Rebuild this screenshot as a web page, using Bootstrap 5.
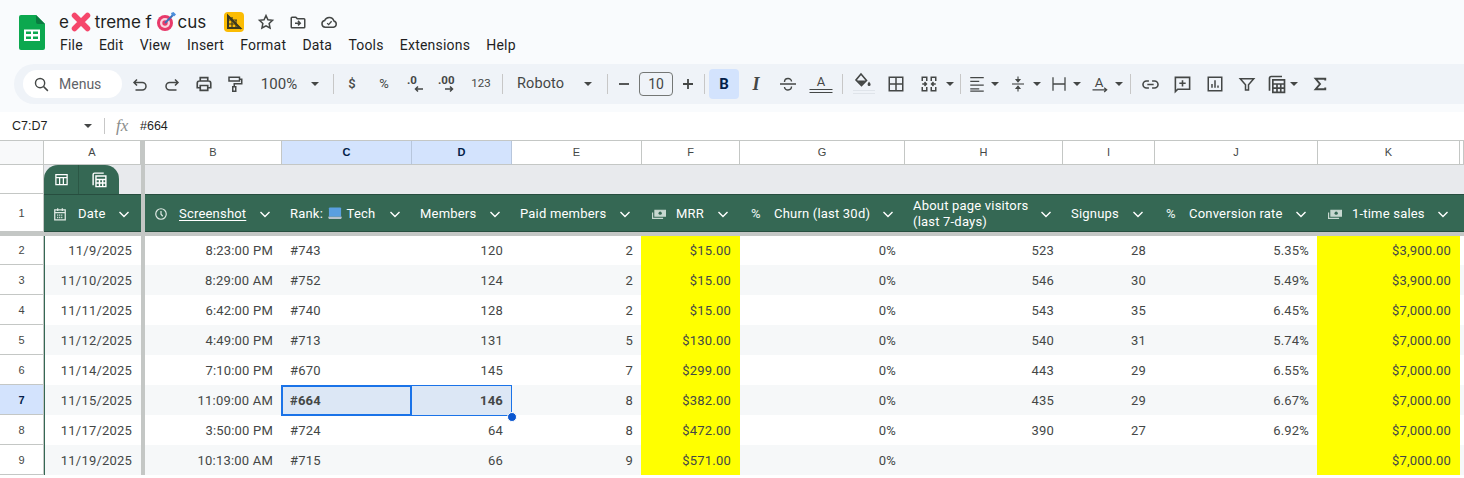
<!DOCTYPE html>
<html lang="en">
<head>
<meta charset="utf-8">
<title>extreme focus</title>
<link href="https://cdn.jsdelivr.net/npm/bootstrap@5.3.0/dist/css/bootstrap.min.css" rel="stylesheet">
<style>
html,body{margin:0;height:478px;overflow:hidden;background:#fff}
body{font-family:Roboto,"Noto Sans",sans-serif;color:#444746}
.appbar{height:112px;background:#f9fbfd;position:relative}
.titlerow{height:64px;display:flex;padding-left:19px}
.logo{width:26px;height:35px;margin-top:15px;margin-right:14px;flex:none}
.titlecol{display:flex;flex-direction:column}
.doctitle{height:24px;margin-top:10px;display:flex;align-items:center;font-size:17px;color:#1f1f1f;line-height:24px;font-family:Inter,Roboto,sans-serif;letter-spacing:-.1px}
.doctitle svg{flex:none}
.gapx{margin:0 4px 0 2px}
.gapt{margin:0 2px 0 4px}
.bd1{margin-left:18px}.bd2{margin-left:13px}.bd3{margin-left:14px}.bd4{margin-left:13px}
.menus{display:flex;font-size:14px;line-height:20px;color:#1f1f1f;margin-top:1px;padding-left:1px;gap:16.2px;letter-spacing:.2px}
.tools{height:40px;margin:0 0 0 14px;background:#eff3f8;border-radius:24px 0 0 24px;display:flex;align-items:center;padding-left:9px}
.searchpill{width:99px;height:28px;background:#fff;border-radius:14px;display:flex;align-items:center;padding-left:10px;font-size:14px;color:#5f6368;gap:9px;margin-right:2px;flex:none}
.tb{display:flex;align-items:center;justify-content:center;flex:none;height:28px;color:#444746}
.tb svg{display:block}
.sep{width:1px;height:20px;background:#c7c7c7;flex:none}
.tt{font-size:14px;color:#444746}
.f15{font-size:15px}.f13{font-size:13px}.f11{font-size:11.5px}.fb{font-weight:500}
.fontname{font-size:14.5px;letter-spacing:.1px;justify-content:flex-start}
.caret{width:0;height:0;border-left:4px solid transparent;border-right:4px solid transparent;border-top:4px solid #444746;flex:none}
.boldon{background:#d3e3fd;border-radius:4px;width:30px;height:30px;font-weight:700;font-size:15px;color:#041e49}
.italt{font-family:"Liberation Serif",serif;font-style:italic;font-weight:700;font-size:18px}
.sizebox{width:34px;height:24px;border:1px solid #747775;border-radius:4px;font-size:14px;display:flex;align-items:center;justify-content:center;flex:none}
.tw8{width:8px}.tw10{width:10px}.tw12{width:12px}.tw14{width:14px}.tw26{width:26px}.tw27{width:27px}.tw28{width:28px}.tw30{width:30px}.tw31{width:31px}.tw32{width:32px}.tw33{width:33px}.tw34{width:34px}.tw48{width:48px}.tw54{width:54px}
.tm1{margin-left:1px}.tm2{margin-left:2px}.tm3{margin-left:3px}.tm4{margin-left:4px}.tm5{margin-left:5px}.tm6{margin-left:6px}.tm11{margin-left:11px}.tm12{margin-left:12px}.tm14{margin-left:14px}.tm16{margin-left:16px}
.fbar{height:28px;background:#fff;display:flex;align-items:center;font-size:13px;color:#1f1f1f}
.namebox{width:92px;display:flex;align-items:center;justify-content:space-between;padding:0 0 0 12px;font-size:12.5px;font-family:"Liberation Sans",sans-serif;flex:none}
.fxsep{width:1px;height:16px;background:#c7c7c7;margin:0 11px 0 12px;flex:none}
.fxico{font-family:"Liberation Serif",serif;font-style:italic;font-size:17px;color:#8a8d8c;width:24px;flex:none;line-height:20px}
.fval{font-size:12.5px;font-family:"Liberation Sans",sans-serif}
.sheetwrap{position:relative;border-top:1px solid #c4c7c5;height:338px;overflow:hidden}
.sheetgrid{border-collapse:separate;border-spacing:0;table-layout:fixed;width:1464px;font-size:13px}
.c44{width:44px}.c97{width:97px}.c4{width:4px}.c137{width:137px}.c130{width:130px}.c100{width:100px}.c98{width:98px}.c165{width:165px}.c158{width:158px}.c92{width:92px}.c163{width:163px}.c142{width:142px}
.sheetgrid td,.sheetgrid th{padding:0;overflow:hidden;white-space:nowrap}
.chead th{height:24px;background:#fff;border-right:1px solid #c4c7c5;border-bottom:1px solid #c4c7c5;text-align:center;font-weight:500;font-size:11px;color:#444746;font-family:"Liberation Sans",sans-serif}
.chead th.corner{background:#f8f9fa}
.chead th.picked{background:#d3e3fd;color:#041e49;font-weight:700;border-right-color:#b7c6dc}
.fz{background:#c4c7c5!important;border:0!important;padding:0!important}
.rowtag{background:#fff;border-right:1px solid #c4c7c5;border-bottom:1px solid #c4c7c5;text-align:center;font-size:11px;color:#444746;font-family:"Liberation Sans",sans-serif}
.rowtag.on{background:#d3e3fd;color:#041e49;font-weight:700}
.graybar td{height:29px;background:#e8eaed;vertical-align:bottom}
.graybar td.rowtag{background:#fff}
.tabshell{display:flex;width:75px;height:29px;background:#356854;border-radius:14px 14px 0 0;color:#fff}
.tabshell span{display:flex;align-items:center;justify-content:center}
.tabshell span:first-child{width:34px;flex:none}
.tabshell span+span{flex:1;border-left:1px solid #2b5745}
.hdr td{height:38px;background:#356854;color:#fff;border-top:1px solid #274e3f;border-bottom:1px solid #274e3f;font-size:13px;line-height:16px;font-weight:400;letter-spacing:.2px}
.hdr td.rowtag{background:#fff;color:#444746;font-size:11px;border-top:0;border-bottom:1px solid #c4c7c5;letter-spacing:0}
.hcell{display:flex;align-items:center;padding:2px 12px 0 8px;height:36px;white-space:nowrap}
.hcell .lab{flex:1;min-width:0}
.hcell svg{flex:none}
.hcell .pre{width:26px;padding-left:2px;display:flex;align-items:center;flex:none}
.pctmark{font-size:13px;color:#dfe9e4;font-weight:500;padding-left:1px}
.laptop{vertical-align:-2px;margin:0 1px 0 2px}
.ul{text-decoration:underline;text-underline-offset:2px}
.fzrow td{height:4px;background:#c4c7c5;padding:0;border:0}
.sheetgrid .dat td{height:30px;padding:2px 9px 0 8px;font-size:13px;color:#444746;background:#fff;text-align:right;letter-spacing:.2px}
.sheetgrid .dat.first td{height:29px;padding-top:0}
.sheetgrid .dat.alt td{background:#f6f8f9}
.sheetgrid .dat td.rowtag{padding-left:0;padding-right:0;background:#fff;text-align:center;font-size:11px;letter-spacing:0}
.sheetgrid .dat td.rowtag.on{background:#d3e3fd;color:#041e49}
.dat td.colA{box-shadow:inset 1px 0 0 #356854}
.sheetgrid .dat td.lf{text-align:left}
.sheetgrid .dat td.yel{background:#ff0;box-shadow:-1px 0 0 #ff0}
.sheetgrid .dat td.sel{background:#dce7f5;font-weight:700}
.sheetgrid .dat td.fz{background:#c4c7c5;padding:0}
.selbox{position:absolute;pointer-events:none}
.selmain{left:281px;top:244px;width:131px;height:31px;border:2px solid #1a73e8}
.selrange{left:281px;top:244px;width:231px;height:31px;border:1px solid #1a73e8}
.selknob{left:507px;top:271px;width:10px;height:10px;background:#0b57d0;border:1px solid #fff;border-radius:50%}
</style>
</head>
<body>
<div class="appbar">
  <div class="titlerow">
    <svg class="logo" viewBox="0 0 26 35"><path d="M2 0h15l9 9v24a2 2 0 0 1-2 2H2a2 2 0 0 1-2-2V2a2 2 0 0 1 2-2z" fill="#0ca84f"/><path d="M17 0l9 9h-7a2 2 0 0 1-2-2z" fill="#0a7a40"/><path d="M5 14.500h16V26H5z" fill="#fff"/><path d="M7 16.500h5v2.500H7zM14 16.500h5v2.500h-5zM7 21.500h5V24H7zM14 21.500h5V24h-5z" fill="#0ca84f"/></svg>
    <div class="titlecol">
      <div class="doctitle"><span>e</span><svg class="gapx" width="20" height="20" viewBox="0 0 20 20"><path d="M3.500 3.500l13 13M16.500 3.500l-13 13" stroke="#f5476b" stroke-width="5.500" stroke-linecap="round"/></svg><span>treme f</span><svg class="gapt" width="20" height="20" viewBox="0 0 20 20"><circle cx="9" cy="11" r="8" fill="#e8396a"/><circle cx="9" cy="11" r="5" fill="#f9d4df"/><circle cx="9" cy="11" r="2.700" fill="#e8396a"/><path d="M9 11L17 3" stroke="#3d6fb8" stroke-width="2"/><path d="M15 1l.8 2.500 2.500.8L20 2.500 17.500 0z" fill="#4c8fdc"/></svg><span>cus</span>
        <svg class="bd1" width="20" height="20" viewBox="0 0 20 20"><rect width="20" height="20" rx="4" fill="#fbbc04"/><path d="M4 4l12 12H4z" fill="none" stroke="#3c3a20" stroke-width="2"/><path d="M4 8h9M4 12h9M8 5v11M12 8v8M4 4l13 13" stroke="#3c3a20" stroke-width="1.200"/></svg>
        <svg class="bd2" width="18" height="18" viewBox="0 0 24 24"><path d="M12 3.500l2.600 5.600 6.100.7-4.500 4.200 1.200 6-5.400-3-5.400 3 1.200-6-4.500-4.200 6.100-.7z" fill="none" stroke="#444746" stroke-width="2"/></svg>
        <svg class="bd3" width="18" height="18" viewBox="0 0 24 24"><path d="M3 6.500a1 1 0 0 1 1-1h5l2 2h9a1 1 0 0 1 1 1v10a1 1 0 0 1-1 1H4a1 1 0 0 1-1-1z" fill="none" stroke="#444746" stroke-width="2"/><path d="M8 13.500h6M12 10.500l3 3-3 3" fill="none" stroke="#444746" stroke-width="2"/></svg>
        <svg class="bd4" width="18" height="18" viewBox="0 0 24 24"><path d="M7 19a4.500 4.500 0 0 1-.8-8.900A6.500 6.500 0 0 1 18.500 10.600 4.300 4.300 0 0 1 18 19z" fill="none" stroke="#444746" stroke-width="2"/><path d="M9.500 13.500l2 2 4-4.500" fill="none" stroke="#444746" stroke-width="1.800"/></svg>
      </div>
      <div class="menus"><span>File</span><span>Edit</span><span>View</span><span>Insert</span><span>Format</span><span>Data</span><span>Tools</span><span>Extensions</span><span>Help</span></div>
    </div>
  </div>
  <div class="tools">
    <div class="searchpill"><svg width="17" height="17" viewBox="0 0 24 24"><circle cx="10" cy="10" r="6.500" fill="none" stroke="#444746" stroke-width="2"/><path d="M15 15l6 6" stroke="#444746" stroke-width="2"/></svg><span>Menus</span></div>
    <div class="tb tw32"><svg width="18" height="18" viewBox="0 0 24 24" fill="none" stroke="#444746" stroke-width="2"><path d="M8 6l-4 4 4 4M4 10h11a5 5 0 0 1 0 10H6"/></svg></div>
    <div class="tb tw32"><svg width="18" height="18" viewBox="0 0 24 24" fill="none" stroke="#444746" stroke-width="2"><path d="M16 6l4 4-4 4M20 10H9a5 5 0 0 0 0 10h9"/></svg></div>
    <div class="tb tw32"><svg width="18" height="18" viewBox="0 0 24 24" fill="none" stroke="#444746" stroke-width="2.200"><path d="M7 8V3.500h10V8M7 17H3v-6a3 3 0 0 1 3-3h12a3 3 0 0 1 3 3v6h-4"/><path d="M7 14h10v6.500H7z"/></svg></div>
    <div class="tb tw30"><svg width="18" height="18" viewBox="0 0 24 24" fill="none" stroke="#444746" stroke-width="2"><path d="M4 3h14v5H4zM18 5.500h3v6H11v4M9 15.500h4v6H9z"/></svg></div>
    <div class="tb tt tw54 f15 tm2">100%</div>
    <div class="tb tw14 tm2"><span class="caret"></span></div>
    <div class="sep tm11"></div>
    <div class="tb tt tw32 tm2 fb f13">$</div>
    <div class="tb tt tw32 f13">%</div>
    <div class="tb tw32"><svg width="22" height="20" viewBox="0 0 22 20"><text x="2" y="10" font-size="11.500" font-weight="700" fill="#444746" font-family="Roboto">.0</text><path d="M18 15h-7M13 12.500L10.500 15l2.500 2.500" fill="none" stroke="#444746" stroke-width="1.500"/></svg></div>
    <div class="tb tw32"><svg width="24" height="20" viewBox="0 0 24 20"><text x="2" y="10" font-size="11.500" font-weight="700" fill="#444746" font-family="Roboto">.00</text><path d="M9 15h7M14 12.500l2.500 2.500-2.500 2.500" fill="none" stroke="#444746" stroke-width="1.500"/></svg></div>
    <div class="tb tt tw30 tm2 f11">123</div>
    <div class="sep tm6"></div>
    <div class="tb tt tw48 tm14 fontname">Roboto</div>
    <div class="tb tw14 tm16"><span class="caret"></span></div>
    <div class="sep tm12"></div>
    <div class="tb tw31"><svg width="14" height="14" viewBox="0 0 14 14"><path d="M2 7h10" stroke="#444746" stroke-width="1.800"/></svg></div>
    <div class="sizebox">10</div>
    <div class="tb tw30"><svg width="14" height="14" viewBox="0 0 14 14"><path d="M2 7h10M7 2v10" stroke="#444746" stroke-width="1.800"/></svg></div>
    <div class="sep tm1"></div>
    <div class="tb boldon tm4">B</div>
    <div class="tb tw32 tm1 italt">I</div>
    <div class="tb tw32"><svg width="16" height="14" viewBox="0 0 16 14" fill="none" stroke="#444746" stroke-width="1.400"><path d="M0 7h16M4.500 5c0-4.500 7-4.500 7-.5M11.500 9.500c0 4.500-7 4.500-7 .5"/></svg></div>
    <div class="tb tw32 tm1"><svg width="24" height="22" viewBox="0 0 24 22"><text x="12" y="13" text-anchor="middle" font-size="13" fill="#444746" font-family="Roboto">A</text><path d="M.5 16.500h23M.5 19.500h23" stroke="#444746" stroke-width="1"/></svg></div>
    <div class="sep tm5"></div>
    <div class="tb tw32 tm5"><svg width="24" height="24" viewBox="0 0 24 24"><path d="M9 2l5.500 6.500-5 5-5.500-5.500z" fill="none" stroke="#444746" stroke-width="1.600"/><path d="M5 8.500h9l-4.500 4.500z" fill="#444746"/><path d="M17 9.500c1 1.500 1.600 2.100 1.600 2.900a1.500 1.500 0 0 1-3 0c0-.8.500-1.400 1.400-2.900z" fill="#444746"/><path d="M1 18.500h22M1 21.500h22" stroke="#dfe4ea" stroke-width="1"/></svg></div>
    <div class="tb tw32"><svg width="18" height="18" viewBox="0 0 24 24" fill="none" stroke="#444746" stroke-width="2"><path d="M3 3h18v18H3zM12 3v18M3 12h18"/></svg></div>
    <div class="tb tw28 tm3"><svg width="18" height="18" viewBox="0 0 24 24" fill="none" stroke="#444746" stroke-width="2"><path d="M9 8V3H3v5M15 8V3h6v5M3 16v5h6v-5M21 16v5h-6v-5M3 12h5M6 9.500L8.500 12 6 14.500M21 12h-5M18 9.500L15.500 12l2.500 2.500"/></svg></div>
    <div class="tb tw12 tm1"><span class="caret"></span></div>
    <div class="sep tm4"></div>
    <div class="tb tw26 tm3"><svg width="18" height="18" viewBox="0 0 24 24" stroke="#444746" stroke-width="1.700"><path d="M3 3.500h18M3 8.500h12M3 13.500h18M3 18.500h12M3 21.500h18"/></svg></div>
    <div class="tb tw10"><span class="caret"></span></div>
    <div class="tb tw28 tm4"><svg width="18" height="18" viewBox="0 0 24 24" fill="#444746" stroke="#444746" stroke-width="1.500"><path d="M4 12h16" fill="none"/><path d="M12 2v4M12 18v4" fill="none"/><path d="M9.500 6h5L12 9zM9.500 18h5L12 15z"/></svg></div>
    <div class="tb tw10"><span class="caret"></span></div>
    <div class="tb tw26 tm4"><svg width="18" height="18" viewBox="0 0 24 24" fill="none" stroke="#444746" stroke-width="1.700"><path d="M4 3v18M20 3v18M4 12h16"/></svg></div>
    <div class="tb tw10"><span class="caret"></span></div>
    <div class="tb tw28 tm4"><svg width="20" height="20" viewBox="0 0 24 24"><text x="11" y="15" text-anchor="middle" font-size="16" fill="#444746" font-family="Roboto">A</text><path d="M3 19h16M17 16.500l3 2.500-3 2.500" fill="none" stroke="#444746" stroke-width="1.500"/></svg></div>
    <div class="tb tw10"><span class="caret"></span></div>
    <div class="sep tm6"></div>
    <div class="tb tw30 tm4"><svg width="19" height="19" viewBox="0 0 24 24" fill="none" stroke="#444746" stroke-width="2"><path d="M10 7.500H7a4.500 4.500 0 0 0 0 9h3M14 7.500h3a4.500 4.500 0 0 1 0 9h-3M8 12h8"/></svg></div>
    <div class="tb tw34"><svg width="19" height="19" viewBox="0 0 24 24" fill="none" stroke="#444746" stroke-width="2"><path d="M3 3h18v15H6l-3 3zM12 6.500v8M8 10.500h8"/></svg></div>
    <div class="tb tw32"><svg width="18" height="18" viewBox="0 0 24 24" fill="none" stroke="#444746" stroke-width="2"><path d="M3 3h18v18H3zM8 17v-5M12 17V7M16 17v-3"/></svg></div>
    <div class="tb tw32"><svg width="18" height="18" viewBox="0 0 24 24" fill="none" stroke="#444746" stroke-width="2"><path d="M3 5h18l-7 8v7h-4v-7z"/></svg></div>
    <div class="tb tw27"><svg width="20" height="20" viewBox="0 0 24 24" fill="none" stroke="#444746" stroke-width="2"><path d="M3 20V5a2 2 0 0 1 2-2h13"/><path d="M7 7h14v15H7zM7 12h14M7 17h14M12 12v10M16.500 12v10"/></svg></div>
    <div class="tb tw8"><span class="caret"></span></div>
    <div class="tb tw34 tm5"><svg width="14" height="14" viewBox="0 0 16 16" fill="none" stroke="#444746" stroke-width="2.200"><path d="M14 4V2H3l5 6-5 6h11v-2"/></svg></div>
  </div>
</div>
<div class="fbar">
  <div class="namebox"><span>C7:D7</span><span class="caret"></span></div>
  <div class="fxsep"></div>
  <div class="fxico">fx</div>
  <div class="fval">#664</div>
</div>
<div class="sheetwrap">
<table class="sheetgrid">
<colgroup><col class="c44"><col class="c97"><col class="c4"><col class="c137"><col class="c130"><col class="c100"><col class="c130"><col class="c98"><col class="c165"><col class="c158"><col class="c92"><col class="c163"><col class="c142"><col></colgroup>
<tbody id="grid"></tbody>
</table>
<div class="selbox selrange"></div>
<div class="selbox selmain"></div>
<div class="selbox selknob"></div>
</div>
<script>
var chev='<svg width="10" height="7" viewBox="0 0 10 7" fill="none" stroke="#fff" stroke-width="1.400"><path d="M.5 1l4.500 4.500L9.500 1"/></svg>';
var ico={
 cal:'<svg width="12" height="14" viewBox="0 0 20 24" fill="none" stroke="#dfe9e4" stroke-width="2.200"><path d="M1 5h18v17H1zM1 9.500h18M6 2v5M14 2v5"/><path d="M5 14h10M5 18h10" stroke-dasharray="2 1.500"/></svg>',
 clk:'<svg width="12" height="12" viewBox="0 0 24 24" fill="none" stroke="#dfe9e4" stroke-width="2.400"><circle cx="12" cy="12" r="10.500"/><path d="M12 6v6.500l3.500 4"/></svg>',
 cash:'<svg width="14" height="10" viewBox="0 0 24 17" fill="none" stroke="#c7d8d0" stroke-width="2"><path d="M5 2h18v10H5z" fill="#c7d8d0"/><path d="M1 6v10h18"/><circle cx="14" cy="7" r="2.800" fill="#356854" stroke="none"/></svg>',
 pct:'<span class="pctmark">%</span>'
};
var lap='<svg class="laptop" role="img" aria-label="laptop" width="14" height="13" viewBox="0 0 15 13"><path d="M2 0h11a1 1 0 0 1 1 1v9H1V1a1 1 0 0 1 1-1z" fill="#5a9fe0"/><path d="M0 10h15l-1 2.500H1z" fill="#b8c2cc"/></svg>';
var cols=['A','B','C','D','E','F','G','H','I','J','K'];
var heads=[['cal','Date'],['clk','<span class="ul">Screenshot</span>'],[0,'Rank:'+' '+lap+' Tech'],[0,'Members'],[0,'Paid members'],['cash','MRR'],['pct','Churn (last 30d)'],[0,'About page visitors<br>(last 7-days)'],[0,'Signups'],['pct','Conversion rate'],['cash','1-time sales']];
var rows=[
['11/9/2025','8:23:00 PM','#743','120','2','$15.00','0%','523','28','5.35%','$3,900.00'],
['11/10/2025','8:29:00 AM','#752','124','2','$15.00','0%','546','30','5.49%','$3,900.00'],
['11/11/2025','6:42:00 PM','#740','128','2','$15.00','0%','543','35','6.45%','$7,000.00'],
['11/12/2025','4:49:00 PM','#713','131','5','$130.00','0%','540','31','5.74%','$7,000.00'],
['11/14/2025','7:10:00 PM','#670','145','7','$299.00','0%','443','29','6.55%','$7,000.00'],
['11/15/2025','11:09:00 AM','#664','146','8','$382.00','0%','435','29','6.67%','$7,000.00'],
['11/17/2025','3:50:00 PM','#724','64','8','$472.00','0%','390','27','6.92%','$7,000.00'],
['11/19/2025','10:13:00 AM','#715','66','9','$571.00','0%','','','','$7,000.00']];
var h='<tr class="chead"><th class="corner"></th>';
cols.forEach(function(c,i){
  if(i==1)h+='<th class="fz"></th>';
  h+='<th class="'+(c=='C'||c=='D'?'picked':'')+'">'+c+'</th>';
});
h+='<th></th></tr>';
h+='<tr class="graybar"><td class="rowtag"></td><td><div class="tabshell"><span><svg width="15" height="15" viewBox="0 0 24 24" fill="none" stroke="#fff" stroke-width="2"><path d="M3 4h18v16H3zM3 9h18M9 9v11M15 9v11"/></svg></span><span><svg width="17" height="17" viewBox="0 0 24 24" fill="none" stroke="#fff" stroke-width="2"><path d="M3 20V5a2 2 0 0 1 2-2h13"/><path d="M7 7h14v15H7zM7 12h14M7 17h14M12 12v10M16.500 12v10"/></svg></span></div></td><td class="fz"></td><td colspan="11"></td></tr>';
h+='<tr class="hdr"><td class="rowtag">1</td>';
heads.forEach(function(x,i){
  if(i==1)h+='<td class="fz"></td>';
  h+='<td><div class="hcell">'+(x[0]?'<span class="pre">'+ico[x[0]]+'</span>':'')+'<span class="lab">'+x[1]+'</span>'+chev+'</div></td>';
});
h+='<td></td></tr><tr class="fzrow"><td colspan="14"></td></tr>';
rows.forEach(function(r,n){
  var rn=n+2,on=rn==7;
  h+='<tr class="dat'+(rn%2?' alt':'')+(n==0?' first':'')+'"><td class="rowtag'+(on?' on':'')+'">'+rn+'</td>';
  r.forEach(function(v,i){
    if(i==1)h+='<td class="fz"></td>';
    var k=[];
    if(i==0)k.push('colA');
    if(i==2)k.push('lf');
    if(i==5||i==10)k.push('yel');
    if(on&&(i==2||i==3))k.push('sel');
    h+='<td class="'+k.join(' ')+'">'+v+'</td>';
  });
  h+='<td></td></tr>';
});
document.getElementById('grid').innerHTML=h;
</script>
<script src="https://cdn.jsdelivr.net/npm/bootstrap@5.3.0/dist/js/bootstrap.bundle.min.js"></script>
</body>
</html>
